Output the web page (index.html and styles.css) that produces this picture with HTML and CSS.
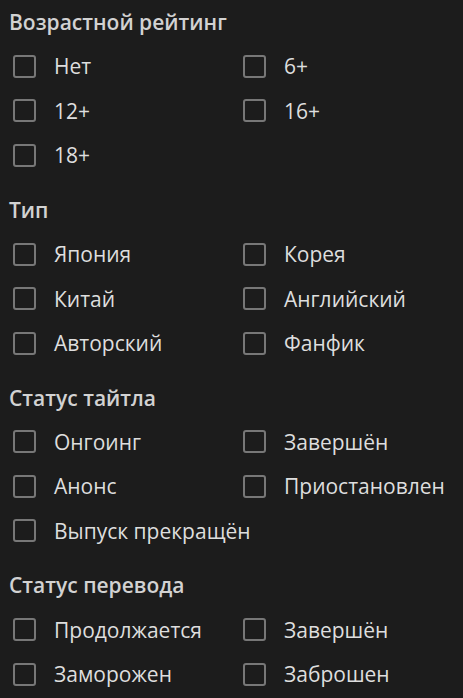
FILE: index.html
```html
<!DOCTYPE html>
<html lang="ru">
<head>
<meta charset="utf-8">
<link rel="stylesheet" href="styles.css">
</head>
<body>
<div class="filters">
  <section class="group">
    <h3 class="title">Возрастной рейтинг</h3>
    <div class="grid">
      <label class="item"><span class="box"></span><span class="label">Нет</span></label>
      <label class="item"><span class="box"></span><span class="label">6+</span></label>
      <label class="item"><span class="box"></span><span class="label">12+</span></label>
      <label class="item"><span class="box"></span><span class="label">16+</span></label>
      <label class="item"><span class="box"></span><span class="label">18+</span></label>
    </div>
  </section>
  <section class="group">
    <h3 class="title">Тип</h3>
    <div class="grid">
      <label class="item"><span class="box"></span><span class="label">Япония</span></label>
      <label class="item"><span class="box"></span><span class="label">Корея</span></label>
      <label class="item"><span class="box"></span><span class="label">Китай</span></label>
      <label class="item"><span class="box"></span><span class="label">Английский</span></label>
      <label class="item"><span class="box"></span><span class="label">Авторский</span></label>
      <label class="item"><span class="box"></span><span class="label">Фанфик</span></label>
    </div>
  </section>
  <section class="group">
    <h3 class="title">Статус тайтла</h3>
    <div class="grid">
      <label class="item"><span class="box"></span><span class="label">Онгоинг</span></label>
      <label class="item"><span class="box"></span><span class="label">Завершён</span></label>
      <label class="item"><span class="box"></span><span class="label">Анонс</span></label>
      <label class="item"><span class="box"></span><span class="label">Приостановлен</span></label>
      <label class="item wide"><span class="box"></span><span class="label">Выпуск прекращён</span></label>
    </div>
  </section>
  <section class="group">
    <h3 class="title">Статус перевода</h3>
    <div class="grid">
      <label class="item"><span class="box"></span><span class="label">Продолжается</span></label>
      <label class="item"><span class="box"></span><span class="label">Завершён</span></label>
      <label class="item"><span class="box"></span><span class="label">Заморожен</span></label>
      <label class="item"><span class="box"></span><span class="label">Заброшен</span></label>
    </div>
  </section>
</div>
</body>
</html>
```
FILE: styles.css
```css
* { box-sizing: border-box; }
html, body {
  margin: 0;
  background: #1c1c1c;
}
body {
  font-family: "Open Sans", "Noto Sans", sans-serif;
  color: #dedede;
}
.filters {
  padding: 10px 0 0 9px;
  display: flex;
  flex-direction: column;
  gap: 20.3px;
}
.title {
  margin: 0 0 10px 0;
  font-size: 21px;
  line-height: 24px;
  font-weight: 600;
  color: #d2d2d2;
}
.grid {
  display: grid;
  grid-template-columns: 230px 230px;
  grid-auto-rows: 44.5px;
}
.item {
  display: flex;
  align-items: center;
  padding-left: 4px;
  white-space: nowrap;
}
.wide { grid-column: 1 / span 2; }
.box {
  width: 23px;
  height: 23px;
  border: 2px solid #777;
  border-radius: 3px;
  flex: none;
  margin-right: 18px;
}
.label {
  font-size: 21px;
  line-height: 24px;
}
```
